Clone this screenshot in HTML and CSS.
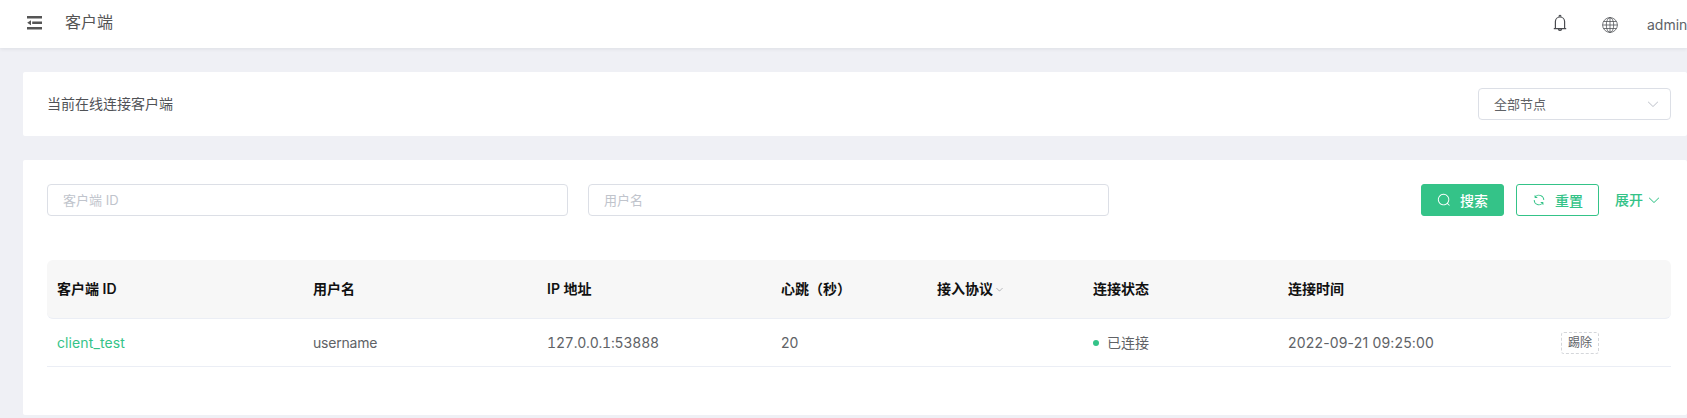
FILE: index.html
```html
<!DOCTYPE html>
<html lang="zh-CN">
<head>
<meta charset="utf-8">
<title>客户端</title>
<link rel="stylesheet" href="styles.css">
</head>
<body>
<svg class="defs" width="0" height="0">
  <symbol id="arrow-down" viewBox="0 0 1024 1024"><path d="M831.872 340.864 512 652.672 192.128 340.864a30.592 30.592 0 0 0-42.752 0 29.12 29.12 0 0 0 0 41.6L489.664 714.24a32 32 0 0 0 44.672 0l340.288-331.712a29.12 29.12 0 0 0 0-41.728 30.592 30.592 0 0 0-42.752 0z"/></symbol>
</svg>
<header class="topbar">
  <svg class="fold" viewBox="0 0 15 14"><path d="M0 0h15v2.6H0zM5.2 5.5H15v2.6H5.2zM0 11h15v2.6H0zM4 4.3v5L0.2 6.8z"/></svg>
  <h1 class="title">客户端</h1>
  <svg class="bell" viewBox="0 0 14 18"><path d="M.8 14.6h12.4M2.4 14.6V7.6a4.6 4.6 0 0 1 9.2 0v7M5.4 15.2a1.7 1.7 0 0 0 3.2 0M6.1 2.6a.95.95 0 1 1 1.8 0"/></svg>
  <svg class="globe" viewBox="0 0 16 16"><circle cx="8" cy="8" r="7.4"/><ellipse cx="8" cy="8" rx="3.7" ry="7.4"/><path d="M8 .6v14.8M.6 8h14.8M1.6 4.5h12.8M1.6 11.5h12.8"/></svg>
  <span class="user">admin</span>
</header>
<main class="content">
  <section class="card node-card">
    <span class="node-label">当前在线连接客户端</span>
    <div class="select"><span>全部节点</span><svg class="icon"><use href="#arrow-down"/></svg></div>
  </section>
  <section class="card list-card">
    <form class="filters">
      <input class="field" type="text" placeholder="客户端 ID">
      <input class="field" type="text" placeholder="用户名">
      <div class="actions">
        <button class="btn primary" type="button"><svg class="icon" viewBox="0 0 1024 1024"><path d="m795.904 750.72 124.992 124.928a32 32 0 0 1-45.248 45.248L750.656 795.904a416 416 0 1 1 45.248-45.248zM480 832a352 352 0 1 0 0-704 352 352 0 0 0 0 704z"/></svg><span>搜索</span></button>
        <button class="btn plain" type="button"><svg class="icon" viewBox="0 0 1024 1024"><path d="M771.776 794.88A384 384 0 0 1 128 512h64a320 320 0 0 0 555.712 216.448H654.72a32 32 0 1 1 0-64h149.056a32 32 0 0 1 32 32v148.928a32 32 0 1 1-64 0v-50.56zM276.288 295.616h92.992a32 32 0 0 1 0 64H220.16a32 32 0 0 1-32-32V178.56a32 32 0 0 1 64 0v50.56A384 384 0 0 1 896.128 512h-64a320 320 0 0 0-555.776-216.384z"/></svg><span>重置</span></button>
        <a class="expand">展开<svg class="icon"><use href="#arrow-down"/></svg></a>
      </div>
    </form>
    <div class="table">
      <div class="row head">
        <span>客户端 ID</span><span>用户名</span><span>IP 地址</span><span>心跳（秒）</span>
        <span class="filterable">接入协议<svg class="icon"><use href="#arrow-down"/></svg></span>
        <span>连接状态</span><span>连接时间</span><span></span>
      </div>
      <div class="row">
        <a class="link">client_test</a><span class="name">username</span><span class="ip">127.0.0.1:53888</span><span>20</span><span></span>
        <span class="status">已连接</span><span class="time">2022-09-21 09:25:00</span>
        <span class="kick-cell"><button class="kick" type="button">踢除</button></span>
      </div>
    </div>
  </section>
</main>
</body>
</html>
```

FILE: styles.css
```css
* { box-sizing: border-box; }
body {
  margin: 0;
  height: 418px;
  overflow: hidden;
  background: #eff0f5;
  color: #606266;
  font: 14px/20px Inter, "Noto Sans CJK SC", sans-serif;
}
button, input { font-family: inherit; }
.defs { display: block; }
.icon { width: 14px; height: 14px; fill: currentColor; flex: none; }

.topbar {
  display: flex;
  align-items: center;
  height: 48px;
  padding-left: 27px;
  background: #fff;
  box-shadow: 0 1px 4px rgba(0, 21, 41, .08);
  white-space: nowrap;
}
.fold { width: 15px; height: 14px; margin-top: -3px; fill: #555; }
.title { margin: -5px auto 0 23px; font-size: 16px; font-weight: 400; color: #555; }
.bell, .globe { fill: none; stroke: #4a4c50; }
.bell { width: 14px; height: 18px; margin-right: 35px; margin-top: -2px; stroke-width: 1.2; }
.globe { width: 16px; height: 16px; margin-right: 29px; margin-top: 1px; stroke-width: .75; }
.user { width: 40px; margin-top: 1px; }

.content { display: grid; gap: 24px; padding: 24px 0 0 23px; }
.card { background: #fff; border-radius: 2px; }
.node-card {
  display: flex;
  align-items: center;
  justify-content: space-between;
  height: 64px;
  padding: 0 16px 0 24px;
}
.node-label { color: #505256; }
.select {
  display: flex;
  align-items: center;
  justify-content: space-between;
  width: 193px;
  height: 32px;
  padding: 0 10px 0 15px;
  border: 1px solid #dcdfe6;
  border-radius: 4px;
  font-size: 13px;
}
.select .icon { color: #c0c4cc; }

.list-card { height: 255px; padding: 24px 16px 0 24px; }
.filters { display: flex; gap: 20px; height: 32px; }
.field {
  width: 521px;
  height: 32px;
  padding: 0 15px;
  border: 1px solid #dcdfe6;
  border-radius: 4px;
  font-size: 13px;
}
.field::placeholder { color: #c0c4cc; opacity: 1; }
.actions { display: flex; align-items: center; gap: 12px; margin-left: auto; }
.btn {
  display: flex;
  align-items: center;
  gap: 9px;
  width: 83px;
  height: 32px;
  padding: 0 0 0 15px;
  border: 1px solid #34c388;
  border-radius: 3px;
  font-size: 14px;
  font-weight: 500;
}
.primary { background: #34c388; color: #fff; }
.plain { background: #fff; color: #34c388; }
.expand { display: flex; align-items: center; gap: 4px; margin: 0 10px 0 4px; color: #34c388; font-weight: 500; }

.table { margin-top: 44px; }
.row {
  display: grid;
  grid-template-columns: 256px 234px 234px 156px 156px 195px 273px 1fr;
  align-items: center;
  height: 48px;
  padding-left: 10px;
  border-bottom: 1px solid #ebeef5;
  white-space: nowrap;
}
.head {
  height: 59px;
  background: #f7f7f7;
  border-radius: 6px;
  color: #111;
  font-weight: 600;
}
.filterable { display: flex; align-items: center; gap: 2px; }
.filterable .icon { width: 9px; height: 9px; color: #909399; }
.link { color: #34c388; letter-spacing: .1px; }
.name { letter-spacing: -.2px; }
.ip { font-variant-numeric: tabular-nums; letter-spacing: -.2px; }
.time { letter-spacing: .17px; }
.status { display: flex; align-items: center; gap: 8px; }
.status::before { content: ""; width: 6px; height: 6px; border-radius: 50%; background: #34c388; }
.kick {
  display: block;
  width: 38px;
  height: 22px;
  padding: 0;
  border: 1px dashed #d4d6da;
  border-radius: 3px;
  background: #fff;
  color: #606266;
  font-size: 12px;
  line-height: 20px;
}
```
